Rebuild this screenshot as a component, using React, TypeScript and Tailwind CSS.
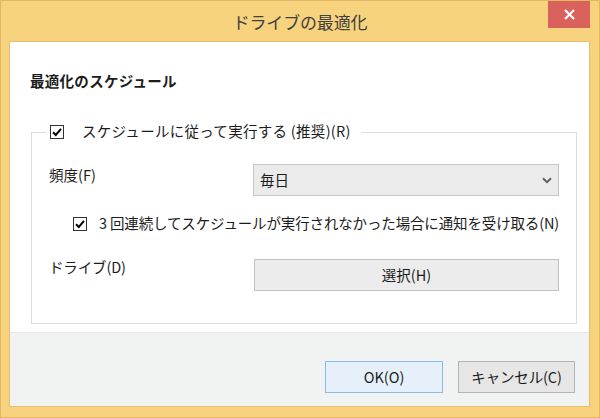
import React from "react"

const font = { fontFamily: '"Noto Sans CJK JP", "Noto Sans", sans-serif' }

function Check() {
  return (
    <span className="flex h-[14px] w-[14px] shrink-0 items-center justify-center border border-[#333333] bg-white">
      <svg width="12" height="12" viewBox="0 0 12 12">
        <path d="M2 6.2 L4.8 9 L10 2.8" fill="none" stroke="#000" strokeWidth="2" />
      </svg>
    </span>
  )
}

export default function App() {
  return (
    <div
      className="flex h-[418px] w-[600px] flex-col border border-[#e2b75f] bg-[#f7d37d] text-[#1c1c1c]"
      style={font}
    >
      {/* title bar */}
      <div className="relative flex h-[40px] shrink-0 items-center justify-center">
        <span className="text-[17px] leading-none tracking-[-0.01em] text-[#3f3f3f]">ドライブの最適化</span>
        <div className="absolute right-[9px] top-0 flex h-[27px] w-[42px] items-center justify-center bg-[#da625d]">
          <svg width="11" height="11" viewBox="0 0 11 11">
            <path d="M1 1 L10 10 M10 1 L1 10" stroke="#fff" strokeWidth="2.2" />
          </svg>
        </div>
      </div>

      {/* client */}
      <div className="ml-[8px] mr-[9px] flex flex-1 flex-col border border-[#e6be6c]">
        <div className="flex flex-1 flex-col bg-white pl-[20px] pr-[15px]">
          <h1 className="mt-[29px] text-[14.5px] font-bold leading-[20px] tracking-[0.02em]">
            最適化のスケジュール
          </h1>

          <fieldset className="mt-[31px] mb-[8px] ml-[1px] flex flex-1 flex-col border border-[#dcdcdc] pl-[17px] pr-[17px]">
            <legend className="ml-[-3px] flex h-[20px] items-center gap-[18px] bg-white pl-[4px] pr-[10px] text-[14.5px] tracking-[0.02em]">
              <Check />
              <span className="mt-[-3px]">スケジュールに従って実行する (推奨)(R)</span>
            </legend>

            <div className="mt-[22px] grid grid-cols-[204px_1fr] items-start">
              <span className="mt-[1px] text-[14.5px] leading-[20px]">頻度(F)</span>
              <div className="flex h-[32px] items-center justify-between border border-[#c5c5c5] bg-[#ebebeb] pl-[6px] pr-[6px]">
                <span className="text-[14.5px]">毎日</span>
                <svg width="10" height="7" viewBox="0 0 10 7">
                  <path d="M1 1.2 L5 5.2 L9 1.2" fill="none" stroke="#606060" strokeWidth="2" />
                </svg>
              </div>
            </div>

            <div className="mt-[18px] flex h-[20px] items-center gap-[12px] pl-[24px]">
              <Check />
              <span className="mt-[-2px] whitespace-nowrap text-[14.5px] tracking-[-0.01em]">
                3 回連続してスケジュールが実行されなかった場合に通知を受け取る(N)
              </span>
            </div>

            <div className="mt-[25px] grid grid-cols-[205px_1fr] items-start">
              <span className="mt-[-2px] text-[14.5px] leading-[20px] tracking-[-0.01em]">ドライブ(D)</span>
              <div className="flex h-[32px] items-center justify-center border border-[#c2c2c2] bg-[#ececec] text-[14.5px]">
                選択(H)
              </div>
            </div>
          </fieldset>
        </div>

        <div className="flex h-[74px] shrink-0 items-start justify-end gap-[15px] border-t border-[#e8e8e8] bg-[#f1f2f2] pr-[14px] pt-[28px]">
          <div className="flex h-[32px] w-[118px] items-center justify-center border border-[#86bbec] bg-[#e6f0fa] text-[14.5px]">
            OK(O)
          </div>
          <div className="flex h-[32px] w-[117px] items-center justify-center border border-[#b4b4b4] bg-[#e6e6e6] text-[14.5px] tracking-[-0.01em]">
            キャンセル(C)
          </div>
        </div>
      </div>
      <div className="h-[10px] shrink-0" />
    </div>
  )
}
